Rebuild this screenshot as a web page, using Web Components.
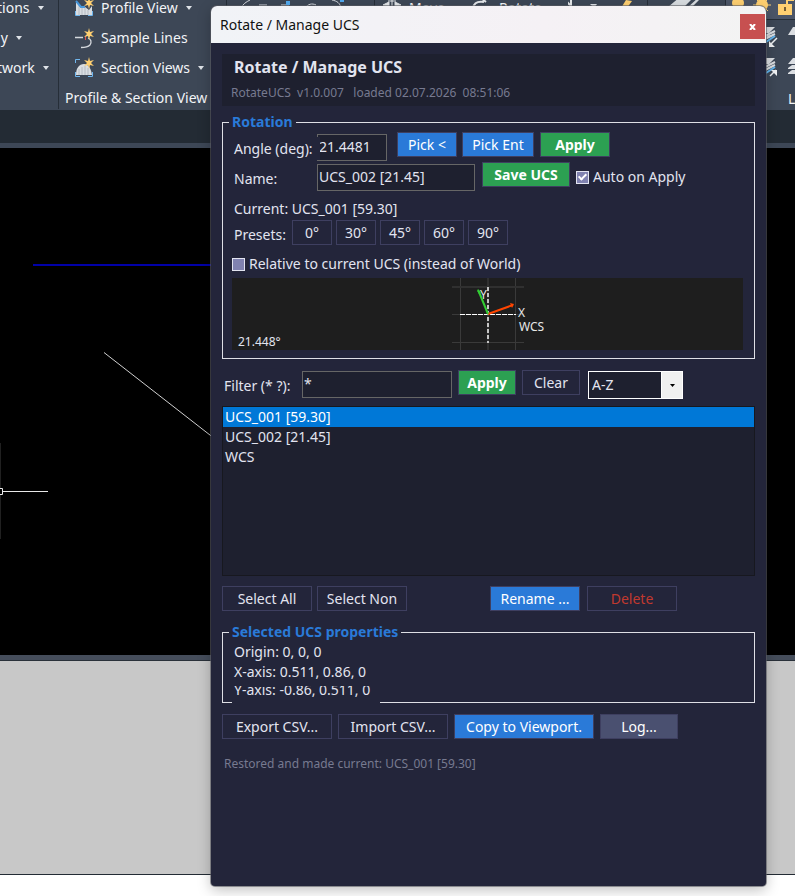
<!DOCTYPE html>
<html lang="en">
<head>
<meta charset="utf-8">
<title>Rotate / Manage UCS</title>
<style>
html, body { height: 100%; margin: 0; }
body { font: 14px/20px "Noto Sans", "Open Sans", sans-serif; overflow: hidden; background: #fff; color: #e2e4f0; }
</style>
</head>
<body>
<cad-desktop>
  <ribbon-bar slot="ribbon"></ribbon-bar>
  <drawing-area slot="drawing"></drawing-area>
  <tool-window slot="window" heading="Rotate / Manage UCS"><ucs-manager></ucs-manager></tool-window>
</cad-desktop>
<script>
const define = (name, html, setup) => {
  const template = document.createElement('template');
  template.innerHTML = html;
  customElements.define(name, class extends HTMLElement {
    connectedCallback() {
      if (this.shadowRoot) return;
      this.attachShadow({ mode: 'open' }).append(template.content.cloneNode(true));
      if (setup) setup(this, this.shadowRoot);
    }
  });
};

define('cad-desktop', `
<style>
:host { display: flex; flex-direction: column; height: 100vh; position: relative; background: #fff; }
.tabs { height: 33px; background: #232b34; border-bottom: 5px solid #3d4756; }
.drawing { flex: 1; display: flex; }
.sheet { height: 213px; background: #c8c8c8; border-top: 1px solid #2a313a; border-bottom: 1px solid #232b34; }
.rim { height: 5px; background: #454d5b; }
.foot { height: 21px; }
</style>
<slot name="ribbon"></slot><div class="tabs"></div>
<div class="drawing"><slot name="drawing"></slot></div>
<div class="rim"></div><div class="sheet"></div><div class="foot"></div>
<slot name="window"></slot>`);

define('ribbon-item', `
<style>
:host { display: flex; height: 30px; }
button { all: unset; display: flex; align-items: center; gap: 8px; white-space: nowrap; color: #f2f4f7; }
i { border: 3px solid transparent; border-top: 4px solid #dfe3e8; border-bottom: 0; }
</style>
<button type="button"><slot name="icon"></slot><span><slot></slot></span></button>`, (host, root) => {
  if (host.hasAttribute('menu')) root.querySelector('button').append(document.createElement('i'));
});

define('ribbon-bar', `
<style>
:host { display: flex; height: 110px; background: #3d4756; overflow: hidden; color: #f2f4f7; }
section { box-sizing: border-box; flex: none; height: 109px; border-right: 1px solid #262e38; overflow: hidden; }
.rows { display: flex; flex-direction: column; margin-top: -7px; }
.cut { width: 59px; }
.cut .rows { margin-left: -3px; }
.profile { width: 168px; padding-left: 6px; }
.profile ribbon-item { padding-left: 9px; }
.profile svg { margin-right: -1px; }
.caption { line-height: 30px; white-space: nowrap; }
.draw { width: 148px; }
.modify { width: 273px; }
.modify .rows { flex-direction: row; padding-left: 7px; gap: 26px; }
.copy { width: 78px; }
.layers { flex: 1; border: 0; display: flex; flex-direction: column; align-items: flex-end; }
.layers .caption { margin-top: 4px; width: 7px; }
svg { display: block; flex: none; }
</style>
<section class="cut"><div class="rows">
  <ribbon-item menu>tions</ribbon-item><ribbon-item menu>&nbsp;y</ribbon-item><ribbon-item menu>twork</ribbon-item>
</div></section>
<section class="profile"><div class="rows">
  <ribbon-item menu>
    <svg slot="icon" width="20" height="30" viewBox="0 0 20 30"><path d="M2 9l5 6 4-1 4 3 3-4v9H2z" fill="#d9dde1"/><path d="M5 13v9M8 15v7M11 15v7M14 17v5" stroke="#b4bac1"/><path d="M2 8l5 6h4" fill="none" stroke="#4597dc" stroke-width="2"/><path d="M1.500 18v4.500H6M14 22.500h4.500V18" fill="none" stroke="#70b7ee"/><path d="M15 4l1 4 4-1-3 3 3 3-4-1-1 4-1-4-4 1 3-3-3-3 4 1z" fill="#ffd071"/></svg>
    Profile View</ribbon-item>
  <ribbon-item>
    <svg slot="icon" width="20" height="30" viewBox="0 0 20 30"><path d="M1 14.500h8M14 15c3 1 4 4 2 7-2 2-4 2.500-9 2.500" fill="none" stroke="#d5d9de" stroke-width="1.300"/><path d="M11.500 13v4" stroke="#dd5353"/><path d="M15 5l1 4 4-1-3 3 3 3-4-1-1 4-1-4-4 1 3-3-3-3 4 1z" fill="#ffd071"/></svg>
    Sample Lines</ribbon-item>
  <ribbon-item menu>
    <svg slot="icon" width="20" height="30" viewBox="0 0 20 30"><path d="M2 22c0-7 3-11 8-11s7 5 8 11z" fill="#d9dde1"/><path d="M5 16v6M8 14v8M11 13v9M14 15v7" stroke="#b4bac1"/><path d="M1.500 10V6.500H6M1.500 19v4.500H6M14 23.500h4.500V19" fill="none" stroke="#70b7ee"/><path d="M15 4l1 4 4-1-3 3 3 3-4-1-1 4-1-4-4 1 3-3-3-3 4 1z" fill="#ffd071"/></svg>
    Section Views</ribbon-item>
  <div class="caption">Profile &amp; Section View</div>
</div></section>
<section class="draw"><svg width="148" height="8"><path d="M14 8c2-4 5-6 9-8M78 8c3-4 7-5 11-3M105 0c5 1 8 3 9 8" fill="none" stroke="#d5d9de"/><path d="M32 5h8M54 5h8" stroke="#d5d9de"/><path d="M59 1h4v4h-4zM113 0h4v2h-4z" fill="#52aaf0"/></svg></section>
<section class="modify"><div class="rows">
  <ribbon-item><svg slot="icon" width="19" height="30"><path d="M1 12l6-3v6zM19 12l-6-3v6zM10 3v18M6 8h8" fill="#e5e8eb" stroke="#e5e8eb"/></svg>Move</ribbon-item>
  <ribbon-item><svg slot="icon" width="20" height="30"><path d="M2 15c1-5 5-7 11-6M10 5l5 4" fill="none" stroke="#e5e8eb" stroke-width="2"/></svg>Rotate</ribbon-item>
  <svg width="76" height="30"><path d="M-4 6l7 7V5" fill="none" stroke="#e5e8eb" stroke-width="2"/><path d="M22 11h7l-3 4z" fill="#dfe3e8"/><path d="M53 15l5-8 6 1-5 7z" fill="#ffd071"/></svg>
</div></section>
<section class="copy"><svg width="77" height="8"><path d="M20 7L32-3h14L36 7zM40 7L50-2h3L44 7z" fill="#d9dde1"/></svg></section>
<section class="layers">
  <svg width="71" height="80" viewBox="0 0 71 80"><path d="M0 0h71v19H0z" fill="#4c5668"/><path d="M0 19.500h71" stroke="#262e38"/><circle cx="14" cy="3" r="6" fill="#ffd071"/><circle cx="38" cy="5" r="6" fill="#ffd071"/><path d="M38-4v18M29 5h18M32-1l12 12M44-1L32 11" stroke="#ffd071"/><path d="M54 4h14v11H54z" fill="#ffd071"/><path d="M63 4V0h7" fill="none" stroke="#ffd071" stroke-width="2"/><path d="M61 7v4" stroke="#775f35" stroke-width="2"/><path d="M34 33l6-6h11l-6 6zM36 36l12-1 3-4-5 6zM34 64l6-6h11l-6 6z" fill="#dcdfe3"/><path d="M41 36l10-5M41 39l10-5M41 67l10-5M41 70l10-5" stroke="#dcdfe3" stroke-width="2"/><path d="M42 42l9-6M42 73l9-6" stroke="#62b5ef" stroke-width="2"/><path d="M53 38l-6 6M46 76l6-6" stroke="#f0f2f4" stroke-width="1.500"/><path d="M45 41v6h6zM47 70h6v6z" fill="#f0f2f4"/><path d="M64 35l5-8h2v8zM64 64l5-6h2v6zM64 68l4-3h3v4h-7zM64 73l4-3h3v4h-7z" fill="#dcdfe3"/></svg>
  <div class="caption">L</div>
</section>`);

define('drawing-area', `
<style>:host { display: flex; flex: 1; background: #000; } svg { width: 100%; height: 100%; }</style>
<svg aria-label="Model space"><path d="M33 117h220" stroke="#0000a8" stroke-width="2"/><path d="M104 204.500L260 326" stroke="#d0d0d0"/><path d="M.5 295v96" stroke="#202020"/><path d="M3 343.500h45" stroke="#e8e8e8"/><path d="M-3 340.500h5.500v6H-3z" fill="#000" stroke="#e8e8e8"/></svg>`);

define('tool-window', `
<style>
:host { position: absolute; inset: 6px 29px 10px 211px; display: flex; flex-direction: column; background: #23253a; border-radius: 6px 6px 4px 4px; overflow: hidden; box-shadow: 0 0 0 1px rgba(90,92,98,.6), 0 4px 14px rgba(0,0,0,.25); }
header { display: flex; justify-content: space-between; height: 37px; flex: none; background: linear-gradient(90deg, #f1f3f7, #f5f1f5 60%, #f3f3f3); color: #111; }
h1 { margin: 0; padding-left: 9px; font: inherit; line-height: 37px; }
button { all: unset; width: 25px; height: 25px; margin: 8px 1px 0 0; background: #c75050; display: grid; place-items: center; }
</style>
<header><h1></h1><button type="button" aria-label="Close"><svg width="7" height="6"><path d="M1 0l5 6M6 0L1 6" stroke="#fff" stroke-width="2"/></svg></button></header>
<slot></slot>`, (host, root) => { root.querySelector('h1').textContent = host.getAttribute('heading'); });

define('ui-button', `
<style>
:host { display: inline-flex; flex: none; width: 90px; }
:host([size="xs"]) { width: 40px; }
:host([size="s"]) { width: 60px; }
:host([size="m"]) { width: 70px; }
:host([size="l"]) { width: 110px; }
:host([size="xl"]) { width: 140px; }
button { box-sizing: border-box; width: 100%; height: 25px; padding: 0; border: 1px solid #3e3f60; background: #23253a; color: #e2e4f0; font: inherit; line-height: 22px; white-space: nowrap; }
:host([tone="blue"]) button { background: #2a7ad8; color: #fff; }
:host([tone="green"]) button { background: #2ca052; color: #fff; font-weight: 700; }
:host([tone="slate"]) button { background: #4a5070; color: #fff; }
:host([tone="danger"]) button { color: #c0392f; }
</style>
<button type="button"><slot></slot></button>`);

define('ui-field', `
<style>
:host { display: flex; align-items: flex-start; --label: 83px; }
label { flex: none; width: var(--label); height: 23px; margin-top: 3px; line-height: 24px; white-space: nowrap; }
:host([tight]) label { width: 86px; margin-right: -3px; background: #23253a; z-index: 1; }
input { box-sizing: border-box; width: var(--field); height: 27px; margin: 0; padding: 0 2px 2px 1px; border: 1px solid #666; border-radius: 0; background: #1e202f; color: #e2e4f0; font: inherit; outline: 0; }
</style>
<label for="f"></label><input id="f" type="text">`, (host, root) => {
  root.querySelector('label').textContent = host.getAttribute('label');
  root.querySelector('input').value = host.getAttribute('value');
});

define('ui-check', `
<style>
:host { display: inline-flex; }
label { display: flex; align-items: center; gap: 4px; white-space: nowrap; }
input { appearance: none; box-sizing: border-box; width: 13px; height: 13px; margin: 0; border: 1px solid #e2e4f0; background: #8082b0; display: grid; place-items: center; }
input:checked::after { content: ""; width: 3px; height: 6px; margin-bottom: 2px; border: solid #fff; border-width: 0 2px 2px 0; transform: rotate(45deg); }
</style>
<label><input type="checkbox"><span><slot></slot></span></label>`, (host, root) => {
  root.querySelector('input').checked = host.hasAttribute('checked');
});

define('ui-select', `
<style>
:host { display: inline-grid; width: 95px; height: 28px; }
select, span { grid-area: 1 / 1; }
select { appearance: none; width: 100%; height: 100%; box-sizing: border-box; padding: 0 24px 0 3px; border: 1px solid #fff; border-radius: 0; background: #1e202f; color: #e2e4f0; font: inherit; }
span { justify-self: end; width: 22px; display: grid; place-items: center; background: #f0f0f0; pointer-events: none; border: 1px solid #fff; box-sizing: border-box; }
</style>
<select aria-label="Sort order"><option>A-Z</option><option>Z-A</option></select>
<span><svg width="5" height="3"><path d="M0 0h5L2.500 3z"/></svg></span>`);

define('ui-group', `
<style>
:host { display: block; }
fieldset { margin: 0; min-width: 0; padding: 0 11px 0 9px; border: 1px solid #dedfe5; }
legend { margin-left: -3px; padding: 0 3px; color: #2a7ad8; font-weight: 700; line-height: 20px; }
</style>
<fieldset><legend></legend><slot></slot></fieldset>`, (host, root) => {
  root.querySelector('legend').textContent = host.getAttribute('heading');
});

define('axis-preview', `
<style>
:host { display: flex; height: 72px; background: #1e1e1e; font-size: 12px; justify-content: center; position: relative; }
output { position: absolute; left: 6px; bottom: 0; line-height: 16px; }
svg { display: block; overflow: visible; font-size: 12px; }
</style>
<output>21.448°</output>
<svg width="72" height="72" aria-label="Axis directions"><path d="M8.500 0v72M63.500 0v72M0 36.500h72M0 64.500h72" stroke="#3a3a3a"/><path d="M36 0v72M0 9h72" stroke="#303030" stroke-width="2"/><path d="M8 36.500h56" stroke="#fff" stroke-dasharray="5 1"/><path d="M36 9v56" stroke="#c4c4c4" stroke-width="2" stroke-dasharray="4 2"/><path d="M36 36l25-9" stroke="#ff4500" stroke-width="2"/><path d="M58 25l4 1-2 4z" fill="#ff4500"/><text x="28" y="21" fill="#e8e8e8">Y</text><path d="M36 36l-9-22" stroke="#32cd32" stroke-width="2"/><path d="M25 13l1-2 3 3-2 2z" fill="#32cd32"/><text x="66" y="39" fill="#e8e8e8">X</text><text x="67" y="53" fill="#e8e8e8">WCS</text></svg>`);

define('ucs-list', `
<style>
:host { display: block; }
ul { box-sizing: border-box; height: 170px; margin: 0; padding: 0; border: 1px solid #17181f; background: #1e202f; list-style: none; }
li { padding-left: 2px; line-height: 20px; }
[aria-selected="true"] { background: #0078d7; color: #fff; }
</style>
<ul role="listbox" tabindex="0" aria-label="Saved UCS">
<li role="option" aria-selected="true">UCS_001 [59.30]</li><li role="option">UCS_002 [21.45]</li><li role="option">WCS</li></ul>`, (host, root) => {
  root.querySelector('ul').addEventListener('click', e => {
    if (e.target.localName !== 'li') return;
    root.querySelectorAll('li').forEach(li => li.setAttribute('aria-selected', li === e.target));
  });
});

define('ucs-manager', `
<style>
:host { display: flex; flex-direction: column; padding: 11px; }
header { height: 52px; box-sizing: border-box; padding: 2px 9px; background: #1e202f; }
h2 { margin: 0; padding-left: 3px; font-size: 16px; line-height: 23px; }
header p { margin: 0; color: #777a90; font-size: 12px; line-height: 28px; white-space: pre; }
.row { display: flex; align-items: flex-start; }
.form { display: flex; flex-direction: column; }
.form .row { height: 30px; padding-left: 2px; }
.group1 { margin-top: 6px; }
.group1 .row > ui-field { margin-top: 2px; }
.current { padding: 7px 0 0 2px; height: 21px; line-height: 20px; }
.presets { gap: 4px; }
.presets span { width: 54px; line-height: 30px; }
.relative { margin-top: 4px; height: 24px; display: flex; align-items: flex-start; }
.preview { margin: 0 0 8px; }
.filter { margin-top: 11px; padding-left: 2px; height: 36px; }
.filter ui-field { margin-top: 1px; }
.gap5 { gap: 5px; }
.actions { margin-top: 10px; }
.group2 { margin-top: 11px; }
.props { height: 60px; padding-left: 2px; line-height: 20px; }
.props p { margin: 0; }
.props .last { width: 146px; height: 18px; margin: 4px 0 0 -2px; padding-left: 2px; line-height: 8px; overflow: hidden; background: #23253a; position: relative; }
.files { margin-top: 11px; gap: 6px; }
.status { margin: 15px 0 0 2px; color: #777a90; font-size: 12px; }
</style>
<header><h2>Rotate / Manage UCS</h2><p>RotateUCS  v1.0.007   loaded 02.07.2026  08:51:06</p></header>
<ui-group class="group1" heading="Rotation"><div class="form">
  <div class="row"><ui-field tight label="Angle (deg):" value="21.4481" style="--field:70px"></ui-field>
    <ui-button tone="blue" size="s" style="margin-left:10px">Pick &lt;</ui-button><ui-button tone="blue" style="margin-left:5px;width:72px">Pick Ent</ui-button><ui-button tone="green" size="m" style="margin-left:6px">Apply</ui-button></div>
  <div class="row"><ui-field label="Name:" value="UCS_002 [21.45]" style="--field:158px"></ui-field>
    <ui-button tone="green" style="margin-left:7px;width:88px">Save UCS</ui-button><ui-check checked style="margin:5px 0 0 6px">Auto on Apply</ui-check></div>
  <div class="current">Current: UCS_001 [59.30]</div>
  <div class="row presets"><span>Presets:</span><ui-button size="xs">0°</ui-button><ui-button size="xs">30°</ui-button><ui-button size="xs">45°</ui-button><ui-button size="xs">60°</ui-button><ui-button size="xs">90°</ui-button></div>
  <div class="relative"><ui-check>Relative to current UCS (instead of World)</ui-check></div>
  <axis-preview class="preview"></axis-preview>
</div></ui-group>
<div class="row filter"><ui-field label="Filter (* ?):" value="*" style="--label:78px;--field:150px"></ui-field>
  <ui-button tone="green" style="margin-left:6px;width:58px">Apply</ui-button><ui-button style="margin-left:6px;width:58px">Clear</ui-button><ui-select style="margin:1px 0 0 8px"></ui-select></div>
<ucs-list></ucs-list>
<div class="row gap5 actions"><ui-button>Select All</ui-button><ui-button>Select Non</ui-button><ui-button tone="blue" style="margin-left:78px">Rename ...</ui-button><ui-button tone="danger" style="margin-left:2px">Delete</ui-button></div>
<ui-group class="group2" heading="Selected UCS properties"><div class="props"><p>Origin: 0, 0, 0</p><p>X-axis: 0.511, 0.86, 0</p><p class="last">Y-axis: -0.86, 0.511, 0</p></div></ui-group>
<div class="row files"><ui-button size="l">Export CSV...</ui-button><ui-button size="l">Import CSV...</ui-button><ui-button tone="blue" size="xl">Copy to Viewport.</ui-button><ui-button tone="slate" style="width:78px">Log...</ui-button></div>
<div class="status" role="status">Restored and made current: UCS_001 [59.30]</div>`);
</script>
</body>
</html>
